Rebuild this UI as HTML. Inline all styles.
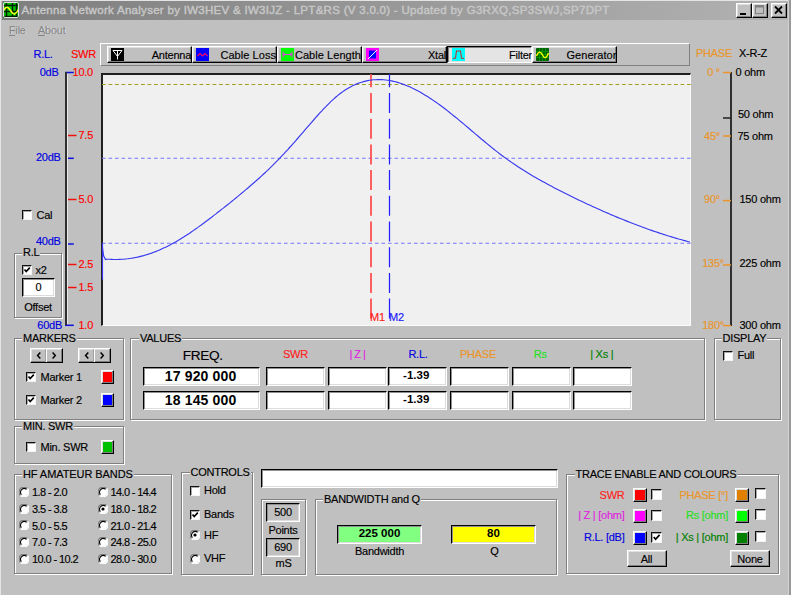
<!DOCTYPE html><html><head><meta charset="utf-8"><style>

html,body{margin:0;padding:0;}
body{width:791px;height:595px;overflow:hidden;position:relative;background:#c0c0c0;font-family:"Liberation Sans", sans-serif;}
body>div,body>svg{position:absolute;}
.t{white-space:pre;font-family:"Liberation Sans", sans-serif;-webkit-text-stroke:0.15px currentColor;}
.rb{border:1px solid;border-color:#fff #000 #000 #fff;box-shadow:inset -1px -1px 0 #808080, inset 1px 1px 0 #dfdfdf;}
.sk{border:1px solid;border-color:#000 #fff #fff #000;box-shadow:inset 1px 1px 0 #909090, inset -1px -1px 0 #dcdcdc;}
.cb{border:1px solid;border-color:#101010 #f4f4f4 #f4f4f4 #101010;box-shadow:inset 1px 1px 0 #a8a8a8;background:#fff;}
.gb{border:1px solid #808080;box-shadow:1px 1px 0 #fff, inset 1px 1px 0 #fff;}

</style></head><body>
<div style="left:0px;top:0px;width:1px;height:595px;background:#e4e4e4"></div>
<div style="left:0px;top:0px;width:791px;height:1px;background:#e4e4e4"></div>
<div style="left:788px;top:0px;width:1px;height:595px;background:#d0d0d0"></div>
<div style="left:789px;top:0px;width:2px;height:595px;background:#999"></div>
<div style="left:2px;top:1px;width:786px;height:18.6px;background:linear-gradient(to right,#7e7e7e,#b2b2b2)"></div>
<svg style="left:3px;top:2px" width="16" height="16" viewBox="0 0 16 16">
<rect x="0" y="0" width="16" height="16" rx="1.5" fill="#00c000"/>
<path d="M0 3.5H16M0 9.5H16M0 14.5H16M3.5 0V16M9.5 0V16M13.5 0V16" stroke="#002000" stroke-width="1.4"/>
<path d="M0.3 8.8 C2.5 5, 4 4.5, 6 6.5 S9 12.5, 11.5 12 S14.5 9, 15.7 6.8" stroke="#ffff20" stroke-width="1.5" fill="none"/>
<rect x="0.5" y="0.5" width="15" height="15" rx="1.5" fill="none" stroke="#e0e0e0" stroke-width="1"/>
</svg>
<div class="t" style="left:21.5px;top:5.16px;font-size:11.5px;line-height:11.5px;color:#c8c8c8;font-weight:normal;letter-spacing:0.29px;-webkit-text-stroke:0.4px #c8c8c8;">Antenna Network Analyser by IW3HEV &amp; IW3IJZ - LPT&amp;RS (V 3.0.0) - Updated by G3RXQ,SP3SWJ,SP7DPT</div>
<div class="rb" style="left:736px;top:3px;width:14px;height:13px;background:#c0c0c0"></div>
<div class="rb" style="left:752px;top:3px;width:14px;height:13px;background:#c0c0c0"></div>
<div class="rb" style="left:771px;top:3px;width:14px;height:13px;background:#c0c0c0"></div>
<svg style="left:736px;top:3px" width="52" height="15"><rect x="4" y="10" width="6" height="2" fill="#000"/><rect x="19.5" y="2.5" width="8" height="8" fill="none" stroke="#808080" stroke-width="1"/><rect x="19.5" y="2.5" width="8" height="2" fill="#808080"/><path d="M39 3.5 L46 10.5 M46 3.5 L39 10.5" stroke="#000" stroke-width="1.8"/></svg>
<div class="t" style="left:9.7px;top:25.40px;font-size:11px;line-height:11px;color:#ececec;font-weight:normal;letter-spacing:-0.25px;-webkit-text-stroke:0;"><u>F</u>ile</div>
<div class="t" style="left:9px;top:24.70px;font-size:11px;line-height:11px;color:#858585;font-weight:normal;letter-spacing:-0.25px;-webkit-text-stroke:0.15px #858585;"><u>F</u>ile</div>
<div class="t" style="left:38.7px;top:25.40px;font-size:11px;line-height:11px;color:#ececec;font-weight:normal;letter-spacing:-0.25px;-webkit-text-stroke:0;"><u>A</u>bout</div>
<div class="t" style="left:38px;top:24.70px;font-size:11px;line-height:11px;color:#858585;font-weight:normal;letter-spacing:-0.25px;-webkit-text-stroke:0.15px #858585;"><u>A</u>bout</div>
<div style="left:100px;top:43px;width:588px;height:21px;border:1px solid;border-color:#fff #808080 #808080 #fff;"></div>
<div class="rb" style="left:107px;top:46px;width:83px;height:15px;background:#c0c0c0"></div>
<svg style="left:111px;top:48px" width="13" height="13" viewBox="0 0 13 13"><rect width="13" height="13" fill="#000"/><path d="M2 2.5H11L6.5 8.5Z M6.5 2.5V11.5" stroke="#fff" stroke-width="1" fill="none"/></svg>
<div class="t" style="right:600px;top:49.70px;font-size:11px;line-height:11px;color:#000;font-weight:normal;letter-spacing:-0.25px;">Antenna</div>
<div class="rb" style="left:192px;top:46px;width:83px;height:15px;background:#c0c0c0"></div>
<svg style="left:196px;top:48px" width="13" height="13" viewBox="0 0 13 13"><rect width="13" height="13" fill="#0000ff"/><path d="M1.5 8 L4 5.5 L6.5 8 L9 5.5 L11.5 8" stroke="#ff0060" stroke-width="1.1" fill="none"/></svg>
<div class="t" style="right:515px;top:49.70px;font-size:11px;line-height:11px;color:#000;font-weight:normal;letter-spacing:0.05px;">Cable Loss</div>
<div class="rb" style="left:277px;top:46px;width:83px;height:15px;background:#c0c0c0"></div>
<svg style="left:281px;top:48px" width="13" height="13" viewBox="0 0 13 13"><rect width="13" height="13" fill="#00ff00"/><path d="M2 6.5H11 M2 3.5V9.5 M11 3.5V9.5 M3.5 5L2.5 6.5L3.5 8 M9.5 5L10.5 6.5L9.5 8" stroke="#e040e0" stroke-width="1" fill="none"/></svg>
<div class="t" style="right:430px;top:49.70px;font-size:11px;line-height:11px;color:#000;font-weight:normal;letter-spacing:0.05px;">Cable Length</div>
<div class="rb" style="left:362px;top:46px;width:83px;height:15px;background:#c0c0c0"></div>
<svg style="left:366px;top:48px" width="13" height="13" viewBox="0 0 13 13"><rect width="13" height="13" fill="#ff00ff"/><rect x="3" y="2.5" width="7" height="8" fill="#0000ff"/><path d="M2 11 L11 2" stroke="#ffffff" stroke-width="1"/></svg>
<div class="t" style="right:345px;top:49.70px;font-size:11px;line-height:11px;color:#000;font-weight:normal;letter-spacing:-0.25px;">Xtal</div>
<div style="left:447px;top:46px;width:83px;height:15px;border:1px solid;border-color:#000 #fff #fff #000;box-shadow:inset 1px 1px 0 #808080, inset -1px -1px 0 #dfdfdf;background:#e4e4e4"></div>
<svg style="left:452px;top:48px" width="13" height="13" viewBox="0 0 13 13"><rect width="13" height="13" fill="#00ffff"/><path d="M1 10.5 L3.5 10 L4.5 3 L8.5 3 L9.5 10 L12 10.5" stroke="#c03030" stroke-width="1.1" fill="none"/></svg>
<div class="t" style="right:259px;top:50.20px;font-size:11px;line-height:11px;color:#000;font-weight:normal;letter-spacing:-0.25px;">Filter</div>
<div class="rb" style="left:532px;top:46px;width:83px;height:15px;background:#c0c0c0"></div>
<svg style="left:536px;top:48px" width="13" height="13" viewBox="0 0 13 13"><rect width="13" height="13" rx="1" fill="#006000"/><path d="M0 3.5H13M0 6.5H13M0 9.5H13M3.5 0V13M6.5 0V13M9.5 0V13" stroke="#00a000" stroke-width="0.8"/><path d="M0.5 8 C2.5 3, 4.5 3, 6.5 7 S10.5 10.5, 12.5 5" stroke="#ffff00" stroke-width="1.4" fill="none"/></svg>
<div class="t" style="right:174.5px;top:49.70px;font-size:11px;line-height:11px;color:#000;font-weight:normal;letter-spacing:0.05px;">Generator</div>
<div class="t" style="left:33.5px;top:48.70px;font-size:11px;line-height:11px;color:#0000e0;font-weight:normal;letter-spacing:-0.25px;">R.L.</div>
<div class="t" style="left:71px;top:48.70px;font-size:11px;line-height:11px;color:#ff0000;font-weight:normal;letter-spacing:-0.25px;">SWR</div>
<div class="t" style="right:732.5px;top:67.20px;font-size:11px;line-height:11px;color:#0000e0;font-weight:normal;letter-spacing:-0.25px;">0dB</div>
<svg style="left:0;top:0" width="100" height="340"><line x1="65" y1="72.5" x2="73.8" y2="72.5" stroke="#1010e0" stroke-width="1.5"/></svg>
<div class="t" style="right:730.3px;top:151.70px;font-size:11px;line-height:11px;color:#0000e0;font-weight:normal;letter-spacing:-0.25px;">20dB</div>
<svg style="left:0;top:0" width="100" height="340"><line x1="65" y1="158.3" x2="73.8" y2="158.3" stroke="#1010e0" stroke-width="1.5"/></svg>
<div class="t" style="right:730.3px;top:236.20px;font-size:11px;line-height:11px;color:#0000e0;font-weight:normal;letter-spacing:-0.25px;">40dB</div>
<svg style="left:0;top:0" width="100" height="340"><line x1="65" y1="244" x2="73.8" y2="244" stroke="#1010e0" stroke-width="1.5"/></svg>
<div class="t" style="right:729px;top:320.20px;font-size:11px;line-height:11px;color:#0000e0;font-weight:normal;letter-spacing:-0.25px;">60dB</div>
<svg style="left:0;top:0" width="100" height="340"><line x1="65" y1="325.3" x2="73.8" y2="325.3" stroke="#1010e0" stroke-width="1.5"/></svg>
<div class="t" style="right:698px;top:67.20px;font-size:11px;line-height:11px;color:#ff0000;font-weight:normal;letter-spacing:-0.25px;">10.0</div>
<div class="t" style="right:698px;top:130.20px;font-size:11px;line-height:11px;color:#ff0000;font-weight:normal;letter-spacing:-0.25px;">7.5</div>
<svg style="left:0;top:0" width="100" height="340"><line x1="67.5" y1="135.5" x2="76.5" y2="135.5" stroke="#f01010" stroke-width="1.5"/></svg>
<div class="t" style="right:698px;top:194.20px;font-size:11px;line-height:11px;color:#ff0000;font-weight:normal;letter-spacing:-0.25px;">5.0</div>
<svg style="left:0;top:0" width="100" height="340"><line x1="67.5" y1="199.5" x2="76.5" y2="199.5" stroke="#f01010" stroke-width="1.5"/></svg>
<div class="t" style="right:698px;top:259.20px;font-size:11px;line-height:11px;color:#ff0000;font-weight:normal;letter-spacing:-0.25px;">2.5</div>
<svg style="left:0;top:0" width="100" height="340"><line x1="67.5" y1="264.5" x2="76.5" y2="264.5" stroke="#f01010" stroke-width="1.5"/></svg>
<div class="t" style="right:698px;top:282.20px;font-size:11px;line-height:11px;color:#ff0000;font-weight:normal;letter-spacing:-0.25px;">1.5</div>
<svg style="left:0;top:0" width="100" height="340"><line x1="67.5" y1="287.5" x2="76.5" y2="287.5" stroke="#f01010" stroke-width="1.5"/></svg>
<div class="t" style="right:698px;top:320.20px;font-size:11px;line-height:11px;color:#ff0000;font-weight:normal;letter-spacing:-0.25px;">1.0</div>
<div style="left:65px;top:72px;width:2px;height:253px;background:#303030"></div>
<div style="left:67px;top:74px;width:1px;height:250px;background:#e8e8e8"></div>
<div class="t" style="left:696px;top:47.70px;font-size:11px;line-height:11px;color:#eb9528;font-weight:normal;letter-spacing:-0.25px;">PHASE</div>
<div class="t" style="left:739px;top:47.70px;font-size:11px;line-height:11px;color:#000;font-weight:normal;letter-spacing:-0.25px;">X-R-Z</div>
<div style="left:730px;top:72px;width:2px;height:254px;background:#303030"></div>
<div class="t" style="right:71px;top:67.20px;font-size:11px;line-height:11px;color:#eb9528;font-weight:normal;letter-spacing:-0.25px;">0 °</div>
<svg style="left:700px;top:0" width="40" height="340"><line x1="23" y1="72.5" x2="31" y2="72.5" stroke="#eb9528" stroke-width="1.5"/></svg>
<div class="t" style="right:71px;top:130.70px;font-size:11px;line-height:11px;color:#eb9528;font-weight:normal;letter-spacing:-0.25px;">45°</div>
<svg style="left:700px;top:0" width="40" height="340"><line x1="23" y1="136" x2="31" y2="136" stroke="#eb9528" stroke-width="1.5"/></svg>
<div class="t" style="right:71px;top:194.20px;font-size:11px;line-height:11px;color:#eb9528;font-weight:normal;letter-spacing:-0.25px;">90°</div>
<svg style="left:700px;top:0" width="40" height="340"><line x1="23" y1="200.6" x2="31" y2="200.6" stroke="#eb9528" stroke-width="1.5"/></svg>
<div class="t" style="right:67px;top:258.20px;font-size:11px;line-height:11px;color:#eb9528;font-weight:normal;letter-spacing:-0.25px;">135°</div>
<svg style="left:700px;top:0" width="40" height="340"><line x1="23" y1="265" x2="31" y2="265" stroke="#eb9528" stroke-width="1.5"/></svg>
<div class="t" style="right:67px;top:320.20px;font-size:11px;line-height:11px;color:#eb9528;font-weight:normal;letter-spacing:-0.25px;">180°</div>
<svg style="left:700px;top:0" width="40" height="340"><line x1="23" y1="325.6" x2="31" y2="325.6" stroke="#eb9528" stroke-width="1.5"/></svg>
<svg style="left:700px;top:0" width="40" height="340"><line x1="23" y1="118" x2="31" y2="118" stroke="#202020" stroke-width="1.5"/></svg>
<div class="t" style="left:735.5px;top:67.20px;font-size:11px;line-height:11px;color:#000;font-weight:normal;letter-spacing:-0.25px;">0 ohm</div>
<div class="t" style="left:738px;top:109.20px;font-size:11px;line-height:11px;color:#000;font-weight:normal;letter-spacing:-0.25px;">50 ohm</div>
<div class="t" style="left:737.5px;top:130.70px;font-size:11px;line-height:11px;color:#000;font-weight:normal;letter-spacing:-0.25px;">75 ohm</div>
<div class="t" style="left:739.5px;top:193.70px;font-size:11px;line-height:11px;color:#000;font-weight:normal;letter-spacing:-0.25px;">150 ohm</div>
<div class="t" style="left:739.5px;top:257.70px;font-size:11px;line-height:11px;color:#000;font-weight:normal;letter-spacing:-0.25px;">225 ohm</div>
<div class="t" style="left:739.5px;top:320.20px;font-size:11px;line-height:11px;color:#000;font-weight:normal;letter-spacing:-0.25px;">300 ohm</div>
<div style="left:101px;top:73px;width:590px;height:253px;box-sizing:border-box;border-top:2px solid #202020;border-left:2px solid #202020;border-bottom:1px solid #fbfbfb;border-right:1px solid #fbfbfb;background:#f0f0f0"></div>
<svg style="left:0;top:0" width="791" height="595">
<line x1="102" y1="84.5" x2="691" y2="84.5" stroke="#a0a020" stroke-width="1.2" stroke-dasharray="3.8 2.7"/>
<line x1="102" y1="158.2" x2="691" y2="158.2" stroke="#7676fa" stroke-width="1.05" stroke-dasharray="3.6 2.9"/>
<line x1="102" y1="243.3" x2="691" y2="243.3" stroke="#7676fa" stroke-width="1.05" stroke-dasharray="3.6 2.9"/>
<line x1="371" y1="74" x2="371" y2="320" stroke="#ff4848" stroke-width="1.7" stroke-dasharray="20 5.7" stroke-dashoffset="6.7"/>
<line x1="389.5" y1="74" x2="389.5" y2="320" stroke="#2020ff" stroke-width="1.25" stroke-dasharray="20 5.7" stroke-dashoffset="6.7"/>
<path d="M102.5,243 L102.5,279.5 M102.5,247 L103.6,255.7 L105.6,259.8 L105.6,259.0 L107.6,259.2 L109.6,259.3 L111.6,259.4 L113.6,259.5 L115.6,259.5 L117.6,259.5 L119.6,259.4 L121.6,259.3 L123.6,259.2 L125.6,259.0 L127.6,258.8 L129.6,258.5 L131.6,258.2 L133.6,257.9 L135.6,257.5 L137.6,257.1 L139.6,256.6 L141.6,256.1 L143.6,255.6 L145.6,255.0 L147.6,254.4 L149.6,253.7 L151.6,253.1 L153.6,252.3 L155.6,251.6 L157.6,250.8 L159.6,249.9 L161.6,249.0 L163.6,248.1 L165.6,247.2 L167.6,246.2 L169.6,245.2 L171.6,244.1 L173.6,243.0 L175.6,241.9 L177.6,240.8 L179.6,239.6 L181.6,238.3 L183.6,237.1 L185.6,235.8 L187.6,234.5 L189.6,233.2 L191.6,231.8 L193.6,230.4 L195.6,229.0 L197.6,227.6 L199.6,226.1 L201.6,224.7 L203.6,223.2 L205.6,221.7 L207.6,220.2 L209.6,218.7 L211.6,217.2 L213.6,215.6 L215.6,214.1 L217.6,212.5 L219.6,211.0 L221.6,209.4 L223.6,207.9 L225.6,206.3 L227.6,204.7 L229.6,203.1 L231.6,201.5 L233.6,199.9 L235.6,198.2 L237.6,196.6 L239.6,194.9 L241.6,193.3 L243.6,191.6 L245.6,189.9 L247.6,188.2 L249.6,186.5 L251.6,184.8 L253.6,183.0 L255.6,181.3 L257.6,179.5 L259.6,177.7 L261.6,175.9 L263.6,174.0 L265.6,172.2 L267.6,170.3 L269.6,168.3 L271.6,166.4 L273.6,164.4 L275.6,162.4 L277.6,160.4 L279.6,158.3 L281.6,156.2 L283.6,154.1 L285.6,151.9 L287.6,149.8 L289.6,147.5 L291.6,145.3 L293.6,143.1 L295.6,140.8 L297.6,138.5 L299.6,136.2 L301.6,133.9 L303.6,131.6 L305.6,129.2 L307.6,126.9 L309.6,124.6 L311.6,122.3 L313.6,120.0 L315.6,117.7 L317.6,115.5 L319.6,113.2 L321.6,111.1 L323.6,108.9 L325.6,106.9 L327.6,104.8 L329.6,102.8 L331.6,100.9 L333.6,99.1 L335.6,97.3 L337.6,95.6 L339.6,94.0 L341.6,92.5 L343.6,91.1 L345.6,89.8 L347.6,88.5 L349.6,87.4 L351.6,86.3 L353.6,85.3 L355.6,84.4 L357.6,83.6 L359.6,82.8 L361.6,82.2 L363.6,81.6 L365.6,81.1 L367.6,80.6 L369.6,80.3 L371.6,80.0 L373.6,79.8 L375.6,79.7 L377.6,79.6 L379.6,79.6 L381.6,79.6 L383.6,79.8 L385.6,80.0 L387.6,80.2 L389.6,80.5 L391.6,80.9 L393.6,81.4 L395.6,81.8 L397.6,82.4 L399.6,83.0 L401.6,83.7 L403.6,84.4 L405.6,85.2 L407.6,86.0 L409.6,86.8 L411.6,87.7 L413.6,88.7 L415.6,89.7 L417.6,90.8 L419.6,91.8 L421.6,93.0 L423.6,94.2 L425.6,95.4 L427.6,96.6 L429.6,97.9 L431.6,99.2 L433.6,100.6 L435.6,102.0 L437.6,103.4 L439.6,104.8 L441.6,106.3 L443.6,107.8 L445.6,109.3 L447.6,110.9 L449.6,112.5 L451.6,114.1 L453.6,115.7 L455.6,117.3 L457.6,118.9 L459.6,120.6 L461.6,122.3 L463.6,123.9 L465.6,125.6 L467.6,127.3 L469.6,129.0 L471.6,130.7 L473.6,132.4 L475.6,134.1 L477.6,135.8 L479.6,137.5 L481.6,139.2 L483.6,140.8 L485.6,142.5 L487.6,144.1 L489.6,145.8 L491.6,147.4 L493.6,149.0 L495.6,150.6 L497.6,152.1 L499.6,153.7 L501.6,155.2 L503.6,156.7 L505.6,158.1 L507.6,159.6 L509.6,161.0 L511.6,162.4 L513.6,163.8 L515.6,165.1 L517.6,166.4 L519.6,167.7 L521.6,169.0 L523.6,170.3 L525.6,171.5 L527.6,172.8 L529.6,174.0 L531.6,175.2 L533.6,176.4 L535.6,177.5 L537.6,178.7 L539.6,179.8 L541.6,180.9 L543.6,182.0 L545.6,183.1 L547.6,184.2 L549.6,185.3 L551.6,186.3 L553.6,187.4 L555.6,188.4 L557.6,189.5 L559.6,190.5 L561.6,191.5 L563.6,192.5 L565.6,193.5 L567.6,194.5 L569.6,195.5 L571.6,196.5 L573.6,197.5 L575.6,198.4 L577.6,199.4 L579.6,200.4 L581.6,201.3 L583.6,202.3 L585.6,203.2 L587.6,204.2 L589.6,205.1 L591.6,206.0 L593.6,206.9 L595.6,207.8 L597.6,208.7 L599.6,209.6 L601.6,210.5 L603.6,211.4 L605.6,212.3 L607.6,213.1 L609.6,214.0 L611.6,214.9 L613.6,215.7 L615.6,216.6 L617.6,217.4 L619.6,218.2 L621.6,219.0 L623.6,219.8 L625.6,220.6 L627.6,221.4 L629.6,222.2 L631.6,223.0 L633.6,223.8 L635.6,224.5 L637.6,225.3 L639.6,226.0 L641.6,226.8 L643.6,227.5 L645.6,228.2 L647.6,229.0 L649.6,229.7 L651.6,230.4 L653.6,231.1 L655.6,231.7 L657.6,232.4 L659.6,233.1 L661.6,233.7 L663.6,234.4 L665.6,235.0 L667.6,235.7 L669.6,236.3 L671.6,236.9 L673.6,237.5 L675.6,238.1 L677.6,238.7 L679.6,239.3 L681.6,239.8 L683.6,240.4 L685.6,240.9 L687.6,241.5 L689.6,242.0 L689.5,242.2" stroke="#3838f0" stroke-width="1.15" fill="none" stroke-linejoin="round"/>
</svg>
<div class="t" style="left:370px;top:311.70px;font-size:11px;line-height:11px;color:#ff2020;font-weight:normal;letter-spacing:-0.25px;">M1</div>
<div class="t" style="left:389px;top:311.70px;font-size:11px;line-height:11px;color:#2020ff;font-weight:normal;letter-spacing:-0.25px;">M2</div>
<div class="cb" style="left:22px;top:210px;width:8px;height:8px"></div>
<div class="t" style="left:36.5px;top:209.70px;font-size:11px;line-height:11px;color:#000;font-weight:normal;letter-spacing:-0.25px;">Cal</div>
<div class="gb" style="left:14px;top:253px;width:46px;height:63px"></div>
<div class="t" style="left:23px;top:246.70px;font-size:11px;line-height:11px;color:#000;font-weight:normal;letter-spacing:-0.25px;background:#c0c0c0;padding:0 1px;margin-left:-1px">R.L</div>
<div class="cb" style="left:22px;top:265px;width:8px;height:8px"></div>
<svg style="left:22px;top:265px" width="10" height="10" viewBox="0 0 10 10"><path d="M2.5 4.5 L4.2 6.6 L7.8 2.6" stroke="#000" stroke-width="1.6" fill="none"/></svg>
<div class="t" style="left:35.5px;top:264.70px;font-size:11px;line-height:11px;color:#000;font-weight:normal;letter-spacing:-0.25px;">x2</div>
<div class="sk" style="left:22px;top:278px;width:31px;height:17px;background:#fff"></div>
<div class="t" style="left:-61.5px;width:200px;text-align:center;top:281.70px;font-size:11px;line-height:11px;color:#000;font-weight:normal;letter-spacing:-0.25px;">0</div>
<div class="t" style="left:-62px;width:200px;text-align:center;top:301.70px;font-size:11px;line-height:11px;color:#000;font-weight:normal;letter-spacing:-0.25px;">Offset</div>
<div class="gb" style="left:14px;top:338px;width:108px;height:80px"></div>
<div class="t" style="left:23px;top:332.70px;font-size:11px;line-height:11px;color:#000;font-weight:normal;letter-spacing:-0.25px;background:#c0c0c0;padding:0 1px;margin-left:-1px">MARKERS</div>
<div class="rb" style="left:30px;top:348px;width:31px;height:13px;background:#c0c0c0"></div>
<div style="left:45px;top:349px;width:1px;height:13px;background:#a0a0a0"></div>
<div style="left:46px;top:349px;width:1px;height:13px;background:#fff"></div>
<svg style="left:30px;top:348px" width="33" height="15"><path d="M10.3 4.6 L7.6 7.5 L10.3 10.4 M22.6 4.6 L25.3 7.5 L22.6 10.4" stroke="#000" stroke-width="1.5" fill="none"/></svg>
<div class="rb" style="left:78px;top:348px;width:31px;height:13px;background:#c0c0c0"></div>
<div style="left:93px;top:349px;width:1px;height:13px;background:#a0a0a0"></div>
<div style="left:94px;top:349px;width:1px;height:13px;background:#fff"></div>
<svg style="left:78px;top:348px" width="33" height="15"><path d="M10.3 4.6 L7.6 7.5 L10.3 10.4 M22.6 4.6 L25.3 7.5 L22.6 10.4" stroke="#000" stroke-width="1.5" fill="none"/></svg>
<div class="cb" style="left:26px;top:372px;width:8px;height:8px"></div>
<svg style="left:26px;top:372px" width="10" height="10" viewBox="0 0 10 10"><path d="M2.5 4.5 L4.2 6.6 L7.8 2.6" stroke="#000" stroke-width="1.6" fill="none"/></svg>
<div class="t" style="left:40.5px;top:371.70px;font-size:11px;line-height:11px;color:#000;font-weight:normal;letter-spacing:-0.25px;">Marker 1</div>
<div class="cb" style="left:26px;top:395px;width:8px;height:8px"></div>
<svg style="left:26px;top:395px" width="10" height="10" viewBox="0 0 10 10"><path d="M2.5 4.5 L4.2 6.6 L7.8 2.6" stroke="#000" stroke-width="1.6" fill="none"/></svg>
<div class="t" style="left:40.5px;top:394.70px;font-size:11px;line-height:11px;color:#000;font-weight:normal;letter-spacing:-0.25px;">Marker 2</div>
<div class="rb" style="left:101px;top:370px;width:11px;height:12px;background:#ff0000"></div>
<div class="rb" style="left:101px;top:393px;width:11px;height:12px;background:#0000ff"></div>
<div class="gb" style="left:14px;top:426px;width:108px;height:36px"></div>
<div class="t" style="left:23px;top:421.20px;font-size:11px;line-height:11px;color:#000;font-weight:normal;letter-spacing:-0.25px;background:#c0c0c0;padding:0 1px;margin-left:-1px">MIN. SWR</div>
<div class="cb" style="left:26px;top:442px;width:8px;height:8px"></div>
<div class="t" style="left:40.5px;top:441.70px;font-size:11px;line-height:11px;color:#000;font-weight:normal;letter-spacing:-0.25px;">Min. SWR</div>
<div class="rb" style="left:101px;top:440px;width:11px;height:12px;background:#00c000"></div>
<div class="gb" style="left:130px;top:338px;width:573px;height:80px"></div>
<div class="t" style="left:140px;top:333.20px;font-size:11px;line-height:11px;color:#000;font-weight:normal;letter-spacing:-0.25px;background:#c0c0c0;padding:0 1px;margin-left:-1px">VALUES</div>
<div class="t" style="left:102.69999999999999px;width:200px;text-align:center;top:349.44px;font-size:13.6px;line-height:13.6px;color:#000;font-weight:normal;letter-spacing:-0.35px;">FREQ.</div>
<div class="sk" style="left:143px;top:367px;width:115px;height:17px;background:#fff"></div>
<div class="sk" style="left:143px;top:391px;width:115px;height:17px;background:#fff"></div>
<div class="t" style="left:100.6px;width:200px;text-align:center;top:368.85px;font-size:14px;line-height:14px;color:#000;font-weight:bold;letter-spacing:0.14px;-webkit-text-stroke:0;">17 920 000</div>
<div class="t" style="left:100.6px;width:200px;text-align:center;top:392.85px;font-size:14px;line-height:14px;color:#000;font-weight:bold;letter-spacing:0.14px;-webkit-text-stroke:0;">18 145 000</div>
<div class="sk" style="left:266px;top:367px;width:57px;height:17px;background:#fff"></div>
<div class="sk" style="left:266px;top:391px;width:57px;height:17px;background:#fff"></div>
<div class="t" style="left:195.5px;width:200px;text-align:center;top:349.20px;font-size:11px;line-height:11px;color:#ff2020;font-weight:normal;letter-spacing:-0.25px;">SWR</div>
<div class="sk" style="left:328px;top:367px;width:57px;height:17px;background:#fff"></div>
<div class="sk" style="left:328px;top:391px;width:57px;height:17px;background:#fff"></div>
<div class="t" style="left:257.5px;width:200px;text-align:center;top:349.20px;font-size:11px;line-height:11px;color:#e020e0;font-weight:normal;letter-spacing:-0.25px;word-spacing:-0.6px;">| Z |</div>
<div class="sk" style="left:388px;top:367px;width:57px;height:17px;background:#fff"></div>
<div class="sk" style="left:388px;top:391px;width:57px;height:17px;background:#fff"></div>
<div class="t" style="left:318px;width:200px;text-align:center;top:349.20px;font-size:11px;line-height:11px;color:#0000e0;font-weight:normal;letter-spacing:-0.25px;">R.L.</div>
<div class="sk" style="left:450px;top:367px;width:57px;height:17px;background:#fff"></div>
<div class="sk" style="left:450px;top:391px;width:57px;height:17px;background:#fff"></div>
<div class="t" style="left:378px;width:200px;text-align:center;top:349.20px;font-size:11px;line-height:11px;color:#eb9528;font-weight:normal;letter-spacing:-0.25px;">PHASE</div>
<div class="sk" style="left:512px;top:367px;width:57px;height:17px;background:#fff"></div>
<div class="sk" style="left:512px;top:391px;width:57px;height:17px;background:#fff"></div>
<div class="t" style="left:440.29999999999995px;width:200px;text-align:center;top:349.20px;font-size:11px;line-height:11px;color:#20e020;font-weight:normal;letter-spacing:-0.25px;">Rs</div>
<div class="sk" style="left:573px;top:367px;width:57px;height:17px;background:#fff"></div>
<div class="sk" style="left:573px;top:391px;width:57px;height:17px;background:#fff"></div>
<div class="t" style="left:501.80000000000007px;width:200px;text-align:center;top:349.20px;font-size:11px;line-height:11px;color:#008000;font-weight:normal;letter-spacing:-0.25px;">| Xs |</div>
<div class="t" style="left:316.2px;width:200px;text-align:center;top:369.96px;font-size:11.5px;line-height:11.5px;color:#000;font-weight:bold;letter-spacing:0px;-webkit-text-stroke:0;">-1.39</div>
<div class="t" style="left:316.2px;width:200px;text-align:center;top:393.96px;font-size:11.5px;line-height:11.5px;color:#000;font-weight:bold;letter-spacing:0px;-webkit-text-stroke:0;">-1.39</div>
<div class="gb" style="left:714px;top:338px;width:65px;height:80px"></div>
<div class="t" style="left:722.5px;top:333.00px;font-size:11px;line-height:11px;color:#000;font-weight:normal;letter-spacing:-0.25px;background:#c0c0c0;padding:0 1px;margin-left:-1px">DISPLAY</div>
<div class="cb" style="left:723px;top:350.5px;width:8px;height:8px"></div>
<div class="t" style="left:737.5px;top:349.90px;font-size:11px;line-height:11px;color:#000;font-weight:normal;letter-spacing:-0.25px;">Full</div>
<div class="gb" style="left:14px;top:474px;width:156px;height:98px"></div>
<div class="t" style="left:23px;top:468.70px;font-size:11px;line-height:11px;color:#000;font-weight:normal;letter-spacing:-0.08px;background:#c0c0c0;padding:0 1px;margin-left:-1px">HF AMATEUR BANDS</div>
<svg style="left:19px;top:486.5px" width="10" height="10" viewBox="0 0 10 10"><circle cx="5" cy="5" r="4.3" fill="#fff"/><path d="M8.5 1.5 A4.9 4.9 0 0 0 1.5 8.5" stroke="#808080" stroke-width="1.2" fill="none"/><path d="M7.6 2.4 A3.7 3.7 0 0 0 2.4 7.6" stroke="#000" stroke-width="1.1" fill="none"/><path d="M1.5 8.5 A4.9 4.9 0 0 0 8.5 1.5" stroke="#fff" stroke-width="1.2" fill="none"/></svg>
<div class="t" style="left:32px;top:487.00px;font-size:11px;line-height:11px;color:#000;font-weight:normal;letter-spacing:-0.6px;">1.8 - 2.0</div>
<svg style="left:97.5px;top:486.5px" width="10" height="10" viewBox="0 0 10 10"><circle cx="5" cy="5" r="4.3" fill="#fff"/><path d="M8.5 1.5 A4.9 4.9 0 0 0 1.5 8.5" stroke="#808080" stroke-width="1.2" fill="none"/><path d="M7.6 2.4 A3.7 3.7 0 0 0 2.4 7.6" stroke="#000" stroke-width="1.1" fill="none"/><path d="M1.5 8.5 A4.9 4.9 0 0 0 8.5 1.5" stroke="#fff" stroke-width="1.2" fill="none"/></svg>
<div class="t" style="left:110.6px;top:487.00px;font-size:11px;line-height:11px;color:#000;font-weight:normal;letter-spacing:-0.65px;">14.0 - 14.4</div>
<svg style="left:19px;top:503.5px" width="10" height="10" viewBox="0 0 10 10"><circle cx="5" cy="5" r="4.3" fill="#fff"/><path d="M8.5 1.5 A4.9 4.9 0 0 0 1.5 8.5" stroke="#808080" stroke-width="1.2" fill="none"/><path d="M7.6 2.4 A3.7 3.7 0 0 0 2.4 7.6" stroke="#000" stroke-width="1.1" fill="none"/><path d="M1.5 8.5 A4.9 4.9 0 0 0 8.5 1.5" stroke="#fff" stroke-width="1.2" fill="none"/></svg>
<div class="t" style="left:32px;top:504.00px;font-size:11px;line-height:11px;color:#000;font-weight:normal;letter-spacing:-0.6px;">3.5 - 3.8</div>
<svg style="left:97.5px;top:503.5px" width="10" height="10" viewBox="0 0 10 10"><circle cx="5" cy="5" r="4.3" fill="#fff"/><path d="M8.5 1.5 A4.9 4.9 0 0 0 1.5 8.5" stroke="#808080" stroke-width="1.2" fill="none"/><path d="M7.6 2.4 A3.7 3.7 0 0 0 2.4 7.6" stroke="#000" stroke-width="1.1" fill="none"/><path d="M1.5 8.5 A4.9 4.9 0 0 0 8.5 1.5" stroke="#fff" stroke-width="1.2" fill="none"/><circle cx="5" cy="5" r="1.6" fill="#000"/></svg>
<div class="t" style="left:110.6px;top:504.00px;font-size:11px;line-height:11px;color:#000;font-weight:normal;letter-spacing:-0.65px;">18.0 - 18.2</div>
<svg style="left:19px;top:520px" width="10" height="10" viewBox="0 0 10 10"><circle cx="5" cy="5" r="4.3" fill="#fff"/><path d="M8.5 1.5 A4.9 4.9 0 0 0 1.5 8.5" stroke="#808080" stroke-width="1.2" fill="none"/><path d="M7.6 2.4 A3.7 3.7 0 0 0 2.4 7.6" stroke="#000" stroke-width="1.1" fill="none"/><path d="M1.5 8.5 A4.9 4.9 0 0 0 8.5 1.5" stroke="#fff" stroke-width="1.2" fill="none"/></svg>
<div class="t" style="left:32px;top:520.50px;font-size:11px;line-height:11px;color:#000;font-weight:normal;letter-spacing:-0.6px;">5.0 - 5.5</div>
<svg style="left:97.5px;top:520px" width="10" height="10" viewBox="0 0 10 10"><circle cx="5" cy="5" r="4.3" fill="#fff"/><path d="M8.5 1.5 A4.9 4.9 0 0 0 1.5 8.5" stroke="#808080" stroke-width="1.2" fill="none"/><path d="M7.6 2.4 A3.7 3.7 0 0 0 2.4 7.6" stroke="#000" stroke-width="1.1" fill="none"/><path d="M1.5 8.5 A4.9 4.9 0 0 0 8.5 1.5" stroke="#fff" stroke-width="1.2" fill="none"/></svg>
<div class="t" style="left:110.6px;top:520.50px;font-size:11px;line-height:11px;color:#000;font-weight:normal;letter-spacing:-0.65px;">21.0 - 21.4</div>
<svg style="left:19px;top:536.5px" width="10" height="10" viewBox="0 0 10 10"><circle cx="5" cy="5" r="4.3" fill="#fff"/><path d="M8.5 1.5 A4.9 4.9 0 0 0 1.5 8.5" stroke="#808080" stroke-width="1.2" fill="none"/><path d="M7.6 2.4 A3.7 3.7 0 0 0 2.4 7.6" stroke="#000" stroke-width="1.1" fill="none"/><path d="M1.5 8.5 A4.9 4.9 0 0 0 8.5 1.5" stroke="#fff" stroke-width="1.2" fill="none"/></svg>
<div class="t" style="left:32px;top:537.00px;font-size:11px;line-height:11px;color:#000;font-weight:normal;letter-spacing:-0.6px;">7.0 - 7.3</div>
<svg style="left:97.5px;top:536.5px" width="10" height="10" viewBox="0 0 10 10"><circle cx="5" cy="5" r="4.3" fill="#fff"/><path d="M8.5 1.5 A4.9 4.9 0 0 0 1.5 8.5" stroke="#808080" stroke-width="1.2" fill="none"/><path d="M7.6 2.4 A3.7 3.7 0 0 0 2.4 7.6" stroke="#000" stroke-width="1.1" fill="none"/><path d="M1.5 8.5 A4.9 4.9 0 0 0 8.5 1.5" stroke="#fff" stroke-width="1.2" fill="none"/></svg>
<div class="t" style="left:110.6px;top:537.00px;font-size:11px;line-height:11px;color:#000;font-weight:normal;letter-spacing:-0.65px;">24.8 - 25.0</div>
<svg style="left:19px;top:553.5px" width="10" height="10" viewBox="0 0 10 10"><circle cx="5" cy="5" r="4.3" fill="#fff"/><path d="M8.5 1.5 A4.9 4.9 0 0 0 1.5 8.5" stroke="#808080" stroke-width="1.2" fill="none"/><path d="M7.6 2.4 A3.7 3.7 0 0 0 2.4 7.6" stroke="#000" stroke-width="1.1" fill="none"/><path d="M1.5 8.5 A4.9 4.9 0 0 0 8.5 1.5" stroke="#fff" stroke-width="1.2" fill="none"/></svg>
<div class="t" style="left:32px;top:554.00px;font-size:11px;line-height:11px;color:#000;font-weight:normal;letter-spacing:-0.6px;">10.0 - 10.2</div>
<svg style="left:97.5px;top:553.5px" width="10" height="10" viewBox="0 0 10 10"><circle cx="5" cy="5" r="4.3" fill="#fff"/><path d="M8.5 1.5 A4.9 4.9 0 0 0 1.5 8.5" stroke="#808080" stroke-width="1.2" fill="none"/><path d="M7.6 2.4 A3.7 3.7 0 0 0 2.4 7.6" stroke="#000" stroke-width="1.1" fill="none"/><path d="M1.5 8.5 A4.9 4.9 0 0 0 8.5 1.5" stroke="#fff" stroke-width="1.2" fill="none"/></svg>
<div class="t" style="left:110.6px;top:554.00px;font-size:11px;line-height:11px;color:#000;font-weight:normal;letter-spacing:-0.65px;">28.0 - 30.0</div>
<div class="gb" style="left:181px;top:472px;width:70px;height:101px"></div>
<div class="t" style="left:190.5px;top:466.50px;font-size:11px;line-height:11px;color:#000;font-weight:normal;letter-spacing:-0.25px;background:#c0c0c0;padding:0 1px;margin-left:-1px">CONTROLS</div>
<div class="cb" style="left:190px;top:485.5px;width:8px;height:8px"></div>
<div class="t" style="left:204px;top:485.20px;font-size:11px;line-height:11px;color:#000;font-weight:normal;letter-spacing:-0.25px;">Hold</div>
<div class="cb" style="left:190px;top:509.5px;width:8px;height:8px"></div>
<svg style="left:190px;top:509.5px" width="10" height="10" viewBox="0 0 10 10"><path d="M2.5 4.5 L4.2 6.6 L7.8 2.6" stroke="#000" stroke-width="1.6" fill="none"/></svg>
<div class="t" style="left:204px;top:509.20px;font-size:11px;line-height:11px;color:#000;font-weight:normal;letter-spacing:-0.25px;">Bands</div>
<svg style="left:190px;top:530px" width="10" height="10" viewBox="0 0 10 10"><circle cx="5" cy="5" r="4.3" fill="#fff"/><path d="M8.5 1.5 A4.9 4.9 0 0 0 1.5 8.5" stroke="#808080" stroke-width="1.2" fill="none"/><path d="M7.6 2.4 A3.7 3.7 0 0 0 2.4 7.6" stroke="#000" stroke-width="1.1" fill="none"/><path d="M1.5 8.5 A4.9 4.9 0 0 0 8.5 1.5" stroke="#fff" stroke-width="1.2" fill="none"/><circle cx="5" cy="5" r="1.6" fill="#000"/></svg>
<div class="t" style="left:204px;top:529.70px;font-size:11px;line-height:11px;color:#000;font-weight:normal;letter-spacing:-0.25px;">HF</div>
<svg style="left:190px;top:553.5px" width="10" height="10" viewBox="0 0 10 10"><circle cx="5" cy="5" r="4.3" fill="#fff"/><path d="M8.5 1.5 A4.9 4.9 0 0 0 1.5 8.5" stroke="#808080" stroke-width="1.2" fill="none"/><path d="M7.6 2.4 A3.7 3.7 0 0 0 2.4 7.6" stroke="#000" stroke-width="1.1" fill="none"/><path d="M1.5 8.5 A4.9 4.9 0 0 0 8.5 1.5" stroke="#fff" stroke-width="1.2" fill="none"/></svg>
<div class="t" style="left:204px;top:553.20px;font-size:11px;line-height:11px;color:#000;font-weight:normal;letter-spacing:-0.25px;">VHF</div>
<div class="sk" style="left:261px;top:469px;width:295px;height:17px;background:#fff"></div>
<div class="gb" style="left:261px;top:499px;width:43px;height:74px"></div>
<div class="sk" style="left:266px;top:503px;width:32px;height:17px;background:#c0c0c0"></div>
<div class="t" style="left:183px;width:200px;text-align:center;top:506.70px;font-size:11px;line-height:11px;color:#000;font-weight:normal;letter-spacing:-0.25px;">500</div>
<div class="t" style="left:183px;width:200px;text-align:center;top:525.20px;font-size:11px;line-height:11px;color:#000;font-weight:normal;letter-spacing:-0.25px;">Points</div>
<div class="sk" style="left:266px;top:538px;width:32px;height:17px;background:#c0c0c0"></div>
<div class="t" style="left:183px;width:200px;text-align:center;top:541.70px;font-size:11px;line-height:11px;color:#000;font-weight:normal;letter-spacing:-0.25px;">690</div>
<div class="t" style="left:183.5px;width:200px;text-align:center;top:558.20px;font-size:11px;line-height:11px;color:#000;font-weight:normal;letter-spacing:-0.25px;">mS</div>
<div class="gb" style="left:315px;top:499px;width:240px;height:74px"></div>
<div class="t" style="left:324px;top:493.70px;font-size:11px;line-height:11px;color:#000;font-weight:normal;letter-spacing:-0.25px;background:#c0c0c0;padding:0 1px;margin-left:-1px">BANDWIDTH and Q</div>
<div class="sk" style="left:337px;top:525px;width:83px;height:17px;background:#80ff80"></div>
<div class="t" style="left:279.5px;width:200px;text-align:center;top:528.46px;font-size:11.5px;line-height:11.5px;color:#000;font-weight:bold;letter-spacing:0px;-webkit-text-stroke:0;">225 000</div>
<div class="sk" style="left:451px;top:525px;width:83px;height:17px;background:#ffff00"></div>
<div class="t" style="left:393.5px;width:200px;text-align:center;top:528.46px;font-size:11.5px;line-height:11.5px;color:#000;font-weight:bold;letter-spacing:0px;-webkit-text-stroke:0;">80</div>
<div class="t" style="left:279.5px;width:200px;text-align:center;top:545.70px;font-size:11px;line-height:11px;color:#000;font-weight:normal;letter-spacing:-0.25px;">Bandwidth</div>
<div class="t" style="left:394.5px;width:200px;text-align:center;top:545.70px;font-size:11px;line-height:11px;color:#000;font-weight:normal;letter-spacing:-0.25px;">Q</div>
<div class="gb" style="left:566px;top:474px;width:211px;height:98px"></div>
<div class="t" style="left:575.5px;top:468.70px;font-size:11px;line-height:11px;color:#000;font-weight:normal;letter-spacing:-0.25px;background:#c0c0c0;padding:0 1px;margin-left:-1px">TRACE ENABLE AND COLOURS</div>
<div class="t" style="right:166.5px;top:489.70px;font-size:11px;line-height:11px;color:#ff2020;font-weight:normal;letter-spacing:-0.25px;">SWR</div>
<div class="rb" style="left:633px;top:488px;width:12px;height:12px;background:#ff0000"></div>
<div class="cb" style="left:651px;top:489px;width:9px;height:9px"></div>
<div class="t" style="right:63px;top:489.70px;font-size:11px;line-height:11px;color:#eb9528;font-weight:normal;letter-spacing:-0.25px;">PHASE [°]</div>
<div class="rb" style="left:735px;top:488px;width:12px;height:12px;background:#e08000"></div>
<div class="cb" style="left:755px;top:488px;width:9px;height:9px"></div>
<div class="t" style="right:166.5px;top:509.70px;font-size:11px;line-height:11px;color:#e020e0;font-weight:normal;letter-spacing:-0.25px;">| Z | [ohm]</div>
<div class="rb" style="left:633px;top:509px;width:12px;height:12px;background:#ff00ff"></div>
<div class="cb" style="left:651px;top:510px;width:9px;height:9px"></div>
<div class="t" style="right:63px;top:509.70px;font-size:11px;line-height:11px;color:#20e020;font-weight:normal;letter-spacing:-0.25px;">Rs [ohm]</div>
<div class="rb" style="left:735px;top:509px;width:12px;height:12px;background:#00ff00"></div>
<div class="cb" style="left:755px;top:509px;width:9px;height:9px"></div>
<div class="t" style="right:166.5px;top:532.00px;font-size:11px;line-height:11px;color:#0000e0;font-weight:normal;letter-spacing:-0.25px;">R.L. [dB]</div>
<div class="rb" style="left:633px;top:531px;width:12px;height:12px;background:#0000ff"></div>
<div class="cb" style="left:651px;top:532px;width:9px;height:9px"></div>
<svg style="left:651px;top:532px" width="11" height="11" viewBox="0 0 10 10"><path d="M2.5 4.5 L4.2 6.6 L7.8 2.6" stroke="#000" stroke-width="1.6" fill="none"/></svg>
<div class="t" style="right:63px;top:532.00px;font-size:11px;line-height:11px;color:#008000;font-weight:normal;letter-spacing:-0.25px;">| Xs | [ohm]</div>
<div class="rb" style="left:735px;top:531px;width:12px;height:12px;background:#008000"></div>
<div class="cb" style="left:755px;top:531px;width:9px;height:9px"></div>
<div class="rb" style="left:627px;top:550px;width:38px;height:15px;background:#c0c0c0"></div>
<div class="t" style="left:546.5px;width:200px;text-align:center;top:554.00px;font-size:11px;line-height:11px;color:#000;font-weight:normal;letter-spacing:-0.25px;">All</div>
<div class="rb" style="left:730px;top:550px;width:38px;height:15px;background:#c0c0c0"></div>
<div class="t" style="left:650px;width:200px;text-align:center;top:554.00px;font-size:11px;line-height:11px;color:#000;font-weight:normal;letter-spacing:-0.25px;">None</div>
</body></html>
